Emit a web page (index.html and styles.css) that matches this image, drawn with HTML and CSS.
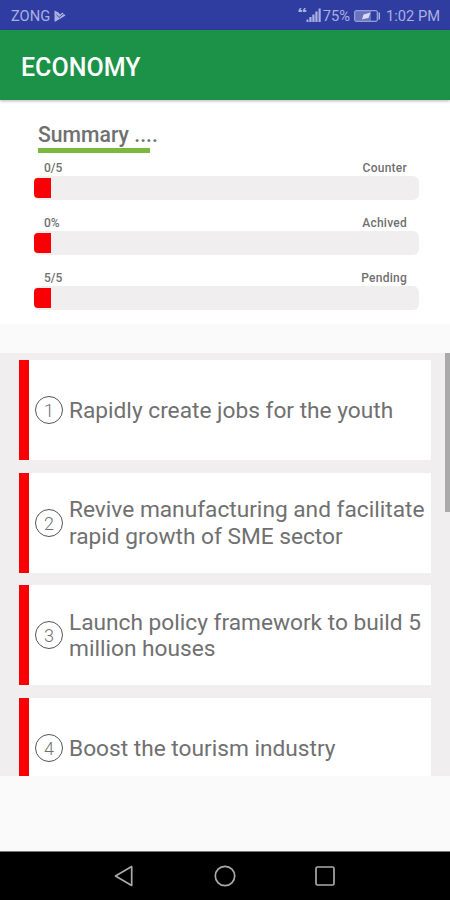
FILE: index.html
```html
<!DOCTYPE html>
<html lang="en">
<head>
<meta charset="utf-8">
<title>Economy</title>
<link rel="stylesheet" href="styles.css">
</head>
<body>
<div class="status">
  <span class="carrier">ZONG</span>
  <svg class="play" width="12" height="12" viewBox="0 0 12 12"><path d="M.5 .5l4 2 1.500 2 2.500-2 3 3-10 6H.5z" fill="#a9b0e2"/><path d="M2.500 4.500l2.500 3 5-4" fill="none" stroke="#303da0" stroke-width=".8"/></svg>
  <svg class="signal" width="24" height="18" viewBox="0 0 24 18" fill="#a9b0e2"><path d="M.5 5V3L2 1h1.500L2.500 3H4v2zM4.800 5V3l1.500-2h1.500l-1 2h1.500v2zM8.500 12.500h2V15h-2zM11.300 10h2.300v5h-2.300zM14.300 7.500h2.300V15h-2.300zM17.300 4.500h2.300V15h-2.300zM20.500 1.500h2.200V15h-2.200z"/></svg>
  <span class="percent">75%</span>
  <svg class="battery" width="27" height="12" viewBox="0 0 27 12"><rect x=".7" y=".7" width="22.600" height="10.600" rx="1" fill="#6972be" stroke="#a9b0e2"/><rect x="17" y="1.500" width="5.500" height="9" fill="#303da0"/><path d="M8 9.500l1.500-5 7-2-2 5.500-5 1z" fill="#d9ddf6"/><path d="M24.500 2.500H26v7h-1.500z" fill="#a9b0e2"/></svg>
  <span class="clock">1:02 PM</span>
</div>
<header class="appbar"><h1>ECONOMY</h1></header>
<section class="summary">
  <h2>Summary ....</h2>
  <div class="meter"><div class="labels"><span>0/5</span><span class="name">Counter</span></div><div class="track"><div class="fill"></div></div></div>
  <div class="meter"><div class="labels"><span>0%</span><span class="name">Achived</span></div><div class="track"><div class="fill"></div></div></div>
  <div class="meter"><div class="labels"><span>5/5</span><span class="name">Pending</span></div><div class="track"><div class="fill"></div></div></div>
</section>
<main class="list">
  <article class="card"><span class="num">1</span><p>Rapidly create jobs for the youth</p></article>
  <article class="card"><span class="num">2</span><p>Revive manufacturing and facilitate<br>rapid growth of SME sector</p></article>
  <article class="card"><span class="num">3</span><p>Launch policy framework to build 5<br>million houses</p></article>
  <article class="card"><span class="num">4</span><p>Boost the tourism industry</p></article>
  <div class="scrollbar"></div>
</main>
<nav class="nav">
  <svg width="24" height="24" viewBox="0 0 24 24"><path d="M18.700 2.600v18.800L2.500 12z"/></svg>
  <svg width="24" height="24" viewBox="0 0 24 24"><circle cx="12" cy="12" r="9.700"/></svg>
  <svg width="24" height="24" viewBox="0 0 24 24"><rect x="3" y="3" width="18" height="18" rx="1.500"/></svg>
</nav>
</body>
</html>
```
FILE: styles.css
```css
* { box-sizing: border-box; }
body {
  margin: 0;
  width: 450px;
  height: 900px;
  overflow: hidden;
  display: flex;
  flex-direction: column;
  background: #fafafa;
  color: #707070;
  font-family: Roboto, sans-serif;
}
h1, h2, p { margin: 0; }
.status {
  flex: none;
  height: 30px;
  display: flex;
  align-items: center;
  padding: 2px 10px 0 11px;
  background: #303da0;
  color: #a9b0e2;
  font-size: 14.7px;
  line-height: 28px;
}
.play { margin-left: 4px; }
.signal { margin-left: auto; }
.percent { margin-left: 1px; }
.battery { margin-left: 4px; }
.clock { margin-left: 5px; }
.appbar {
  flex: none;
  height: 70px;
  display: flex;
  align-items: center;
  padding: 4px 21px 0;
  background: #1c9148;
  box-shadow: 0 1px 3px rgba(0, 0, 0, .3);
  color: #fff;
  z-index: 1;
}
.appbar h1 { font-size: 25px; font-weight: 500; }
.summary {
  flex: none;
  height: 224px;
  padding: 21px 31px 0 34px;
  background: #fff;
}
.summary h2 {
  width: 112px;
  height: 32px;
  margin-left: 4px;
  border-bottom: 5px solid #7ab93d;
  font-size: 21.2px;
  font-weight: 500;
  line-height: 27px;
  white-space: nowrap;
}
.meter { height: 55px; padding-top: 8px; }
.labels {
  display: flex;
  justify-content: space-between;
  padding: 0 12px 0 10px;
  height: 15px;
  font-size: 12px;
  font-weight: 500;
  line-height: 15px;
}
.name { letter-spacing: .25px; }
.track {
  height: 24px;
  padding: 2px 0;
  border-radius: 6px;
  background: #f0eeef;
}
.fill {
  width: 17px;
  height: 20px;
  border-radius: 4px 0 0 4px;
  background: #f90006;
}
.list {
  flex: none;
  position: relative;
  height: 423px;
  margin-top: 29px;
  padding: 7px 19px 0;
  overflow: hidden;
  background: #f0eeef;
}
.card {
  height: 100px;
  margin-bottom: 12.5px;
  display: flex;
  align-items: center;
  padding-left: 6px;
  border-left: 10px solid #f90006;
  background: #fff;
}
.num {
  flex: none;
  width: 28px;
  height: 28px;
  margin-right: 6px;
  border: 1.5px solid #555;
  border-radius: 50%;
  font-size: 18px;
  font-weight: 300;
  line-height: 27px;
  text-align: center;
}
.card p {
  padding-top: 2.6px;
  font-size: 22.7px;
  line-height: 26.5px;
  white-space: nowrap;
}
.scrollbar {
  position: absolute;
  top: 0;
  right: 0;
  width: 5px;
  height: 159px;
  background: #aaa;
}
.nav {
  height: 49px;
  margin-top: auto;
  display: flex;
  justify-content: center;
  align-items: center;
  gap: 76px;
  border-top: 1px solid #777;
  background: #000;
}
.nav svg { fill: none; stroke: #aaa; stroke-width: 1.7; stroke-linejoin: round; }
```
